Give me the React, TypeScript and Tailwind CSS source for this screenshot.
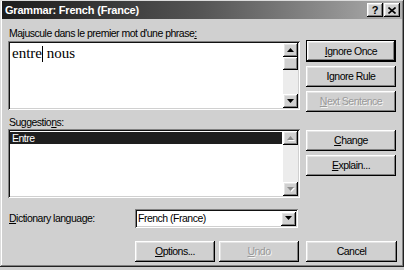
import React from "react";

const raised =
  "shadow-[inset_-1px_-1px_#000,inset_1px_1px_#fff,inset_-2px_-2px_#808080,inset_2px_2px_#e4e4e4]";
const sunken =
  "shadow-[inset_1px_1px_#808080,inset_-1px_-1px_#fff,inset_2px_2px_#111,inset_-2px_-2px_#d0d0d0]";

function Arrow({ down, disabled }: { down?: boolean; disabled?: boolean }) {
  return (
    <div className={`h-[14px] w-[15px] shrink-0 bg-[#d0d0d0] ${raised} flex items-center justify-center`}>
      <svg width="7" height="5" viewBox="0 0 7 5" className={disabled ? "drop-shadow-[1px_1px_0_#fff]" : ""}>
        <polygon
          points={down ? "0,0 7,0 3.5,4" : "0,4 7,4 3.5,0"}
          fill={disabled ? "#8a8a8a" : "#000"}
        />
      </svg>
    </div>
  );
}

function ScrollBar({ disabled }: { disabled?: boolean }) {
  return (
    <div className="w-[15px] h-full flex flex-col bg-[#ececec]">
      <Arrow disabled={disabled} />
      {!disabled && <div className={`h-[13px] w-[15px] bg-[#d0d0d0] ${raised}`} />}
      <div className="flex-1" />
      <Arrow down disabled={disabled} />
    </div>
  );
}

function Btn({
  children,
  w = "w-[90px]",
  disabled,
  isDefault,
}: {
  children: React.ReactNode;
  w?: string;
  disabled?: boolean;
  isDefault?: boolean;
}) {
  return (
    <div className={`${w} ${isDefault ? "h-[22px] border border-black" : "h-[21px]"} shrink-0`}>
      <div
        className={`h-full w-full bg-[#d0d0d0] ${raised} flex items-center justify-center ${
          disabled ? "text-[#999] [text-shadow:1px_1px_0_#f4f4f4]" : "text-black"
        }`}
      >
        {children}
      </div>
    </div>
  );
}

export default function App() {
  return (
    <div className="w-[404px] h-[270px] bg-[#cfcfcf] font-['Liberation_Sans',Arial,sans-serif] text-[10.5px] leading-[13px] tracking-[-0.5px] text-black">
      <div className="h-[267px] w-[404px] bg-[#d0d0d0] shadow-[inset_-1px_-1px_#222,inset_1px_1px_#dcdcdc,inset_-2px_-2px_#808080,inset_2px_2px_#fff] px-[2px] pt-[1px] flex flex-col">
        {/* title bar */}
        <div className="h-[18px] bg-gradient-to-r from-[#1c1c1c] via-[#555] to-[#b0b0b0] flex items-center pl-[3px] pr-[2px]">
          <span className="text-white font-bold text-[11px] tracking-[-0.2px]">Grammar: French (France)</span>
          <div className="ml-auto flex gap-[1px]">
            <div className={`w-[16px] h-[14px] bg-[#d0d0d0] ${raised} flex items-center justify-center font-bold text-[11px] leading-none tracking-normal`}>
              ?
            </div>
            <div className={`w-[16px] h-[14px] bg-[#d0d0d0] ${raised} flex items-center justify-center`}>
              <svg width="8" height="7" viewBox="0 0 8 7">
                <path d="M0.5 0.5 L7.5 6.5 M7.5 0.5 L0.5 6.5" stroke="#000" strokeWidth="1.6" />
              </svg>
            </div>
          </div>
        </div>

        {/* body */}
        <div className="flex pl-[6px] pt-[8px] gap-[6px]">
          <div className="w-[292px] flex flex-col">
            <div className="pl-[1px]">
              Majuscule dans le premier mot d'une phrase<u>:</u>
            </div>
            <div className={`mt-[1px] h-[69px] bg-white ${sunken} flex p-[2px]`}>
              <div className="flex-1 pl-[2px] pt-[2px] font-['Liberation_Serif','Times_New_Roman',serif] text-[15px] leading-[17px] tracking-normal flex items-start">
                <span>entre</span>
                <span className="inline-block w-[1px] h-[16px] bg-black mt-[1px]" />
                <span className="whitespace-pre"> nous</span>
              </div>
              <ScrollBar />
            </div>
            <div className="mt-[6px] pl-[1px]">
              Suggestio<u>n</u>s:
            </div>
            <div className={`h-[69px] bg-white ${sunken} flex p-[2px]`}>
              <div className="flex-1 pt-[1px] pr-[1px]">
                <div className="h-[12px] bg-[#1e1e1e] text-white pl-[2px] leading-[12px]">Entre</div>
              </div>
              <ScrollBar disabled />
            </div>
            <div className="mt-[11px] flex items-center">
              <div className="w-[127px] pl-[1px]">
                <u>D</u>ictionary language:
              </div>
              <div className={`w-[163px] h-[19px] bg-white ${sunken} flex items-center p-[2px]`}>
                <span className="flex-1 pl-[1px]">French (France)</span>
                <Arrow down />
              </div>
            </div>
          </div>

          <div className="flex flex-col pt-[13px]">
            <Btn isDefault>
              <u>I</u>gnore Once
            </Btn>
            <div className="mt-[4px]">
              <Btn>
                I<u>g</u>nore Rule
              </Btn>
            </div>
            <div className="mt-[4px]">
              <Btn disabled>
                <u>N</u>ext Sentence
              </Btn>
            </div>
            <div className="mt-[18px]">
              <Btn>
                <u>C</u>hange
              </Btn>
            </div>
            <div className="mt-[4px]">
              <Btn>
                <u>E</u>xplain...
              </Btn>
            </div>
          </div>
        </div>

        {/* bottom buttons */}
        <div className="mt-[13px] flex pl-[133px]">
          <Btn w="w-[80px]">
            <u>O</u>ptions...
          </Btn>
          <div className="ml-[4px]">
            <Btn w="w-[80px]" disabled>
              <u>U</u>ndo
            </Btn>
          </div>
          <div className="ml-[7px]">
            <Btn w="w-[91px]">Cancel</Btn>
          </div>
        </div>
      </div>
    </div>
  );
}
